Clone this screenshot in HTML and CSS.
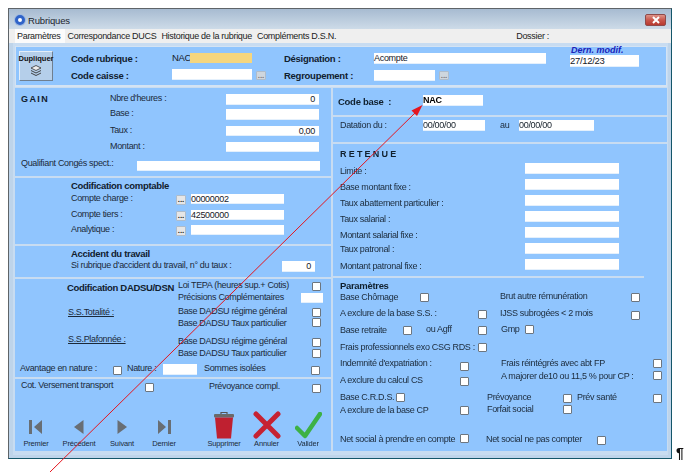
FILE: index.html
```html
<!DOCTYPE html>
<html lang="fr">
<head>
<meta charset="utf-8">
<title>Rubriques</title>
<link rel="stylesheet" href="styles.css">
</head>
<body>
<div class="page">
  <div class="window">
    <div class="titlebar">
      <span class="appicon"></span>
      <span class="title">Rubriques</span>
      <span class="close"><svg width="10" height="8" viewBox="0 0 10 8"><path d="M2 1l6 6M8 1l-6 6" stroke="#fff" stroke-width="2"/></svg></span>
    </div>
    <div class="tabs">
      <span class="tab active">Paramètres</span>
      <span class="tab">Correspondance DUCS</span>
      <span class="tab">Historique de la rubrique</span>
      <span class="tab">Compléments D.S.N.</span>
      <span class="dossier">Dossier :</span>
    </div>
    <div class="frame">
      <div class="content">
        <header class="head">
          <div class="r h18">
            <button class="dup x19"><span>Dupliquer</span>
              <svg width="12" height="11" viewBox="0 0 12 11"><path d="M1 3l5-2.500 5 2.500-5 2.500z" fill="#eee" stroke="#333" stroke-width=".8"/><path d="M1 5.500l5 2.500 5-2.500M1 8l5 2.500L11 8" fill="none" stroke="#333" stroke-width=".9"/></svg>
            </button>
            <span class="lb b x71 t2">Code rubrique :</span>
            <span class="lb plain x172 t2">NAC</span>
            <span class="fld orange x190 t2"></span>
            <span class="lb b x284 t2">Désignation :</span>
            <span class="fld w172 x374 t2">Acompte</span>
            <div class="dern x570"><em>Dern. modif.</em><span class="fld w69 tall">27/12/23</span></div>
          </div>
          <div class="r h18">
            <span class="lb b x71 t1">Code caisse :</span>
            <span class="fld w80 x172 t0"></span>
            <span class="dots x256 t2 flat">...</span>
            <span class="lb b x284 t1">Regroupement :</span>
            <span class="fld w61 x374 t1"></span>
            <span class="dots x439 t2 flat">...</span>
          </div>
        </header>

        <div class="main">
          <div class="left">
            <section class="sec gain">
              <div class="r h15"><span class="lb b sp-tight x21">GAIN</span><span class="lb x110">Nbre d'heures :</span><span class="fld w93 num x226">0</span></div>
              <div class="r h17"><span class="lb x110">Base :</span><span class="fld w93 x226"></span></div>
              <div class="r h16"><span class="lb x110">Taux :</span><span class="fld w93 num x226 low">0,00</span></div>
              <div class="r h17"><span class="lb x110">Montant :</span><span class="fld w93 x226 low"></span></div>
              <div class="r h17"><span class="lb x21">Qualifiant Congés spect.:</span><span class="fld w183 x137 t2 low"></span></div>
            </section>
            <section class="sec compta">
              <div class="r h14"><span class="lb b big x71">Codification comptable</span></div>
              <div class="r h16"><span class="lb x71">Compte charge :</span><span class="dots x176 t1">...</span><span class="fld w93 low x191">00000002</span></div>
              <div class="r h15"><span class="lb x71">Compte tiers :</span><span class="dots x176 t1">...</span><span class="fld w93 low x191">42500000</span></div>
              <div class="r h19"><span class="lb x71">Analytique :</span><span class="dots x176 t1">...</span><span class="fld w93 low x191"></span></div>
            </section>
            <section class="sec accident">
              <div class="r h13"><span class="lb b big x71">Accident du travail</span></div>
              <div class="r h18"><span class="lb x71">Si rubrique d'accident du travail, n° du taux :</span><span class="fld w33 num x282">0</span></div>
            </section>
            <section class="sec dadsu">
              <div class="r h12"><span class="lb b big x67 t1">Codification DADSU/DSN</span><span class="lb x178">Loi TEPA (heures sup.+ Cotis)</span><i class="chk x312 t1"></i></div>
              <div class="r h14"><span class="lb x178">Précisions Complémentaires</span><span class="fld w22 low x301"></span></div>
              <div class="r h11"><span class="lb u x68 t1">S.S.Totalité :</span><span class="lb x178">Base DADSU régime général</span><i class="chk x312 t1"></i></div>
              <div class="r h17"><span class="lb x178 t1">Base DADSU Taux particulier</span><i class="chk x312"></i></div>
              <div class="r h14"><span class="lb u x68">S.S.Plafonnée :</span><span class="lb x178 t2">Base DADSU régime général</span><i class="chk x312 t3"></i></div>
              <div class="r h15"><span class="lb x178">Base DADSU Taux particulier</span><i class="chk x312"></i></div>
              <div class="r h15"><span class="lb x20">Avantage en nature :</span><i class="chk x113 t2"></i><span class="lb x127">Nature :</span><span class="fld w34 x163"></span><span class="lb x204">Sommes isolées</span><i class="chk x311 t2"></i></div>
            </section>
            <section class="transport">
              <div class="r h24"><span class="lb x21">Cot. Versement transport</span><i class="chk x145 t2"></i><span class="lb x209 t1">Prévoyance compl.</span><i class="chk x312 t3"></i></div>
            </section>
            <nav class="actions">
              <div class="act"><svg width="14" height="14" viewBox="0 0 14 14"><path d="M0 0h3v14H0zM13 0v14L5 7z" fill="#686e74"/></svg><span>Premier</span></div>
              <div class="act"><svg width="10" height="14" viewBox="0 0 10 14"><path d="M9.500 0v14L0 7z" fill="#686e74"/></svg><span>Précédent</span></div>
              <div class="act"><svg width="10" height="14" viewBox="0 0 10 14"><path d="M.500 0v14L10 7z" fill="#686e74"/></svg><span>Suivant</span></div>
              <div class="act"><svg width="14" height="14" viewBox="0 0 14 14"><path d="M11 0h3v14h-3zM1 0v14l8-7z" fill="#686e74"/></svg><span>Dernier</span></div>
              <div class="act gap large"><svg width="20" height="28" viewBox="0 0 20 28"><path d="M7 3V1.500h6V3" fill="none" stroke="#555" stroke-width="1.200"/><rect y="3" width="20" height="3.500" rx="1" fill="#6a6a6a"/><path d="M1 6.500h18l-2 21H3z" fill="#bf2030"/></svg><span>Supprimer</span></div>
              <div class="act large"><svg width="28" height="28" viewBox="0 0 28 28"><path d="M3 3l22 22M25 3L3 25" stroke="#c62232" stroke-width="5" stroke-linecap="round"/></svg><span>Annuler</span></div>
              <div class="act large"><svg width="27" height="27" viewBox="0 0 27 27"><path d="M2 16l8 8L25 2" fill="none" stroke="#3db145" stroke-width="4.500" stroke-linecap="round" stroke-linejoin="round"/></svg><span>Valider</span></div>
            </nav>
          </div>

          <div class="right">
            <section class="sec base">
              <div class="r h20"><span class="lb b x338 t1">Code base&nbsp; :</span><span class="fld w60 bold x423">NAC</span></div>
            </section>
            <section class="sec datation">
              <div class="r h22"><span class="lb x340">Datation du :</span><span class="fld w62 x423">00/00/00</span><span class="lb x500">au</span><span class="fld w75 x519">00/00/00</span></div>
            </section>
            <section class="sec retenue">
              <div class="r h14"><span class="lb b sp x340">RETENUE</span></div>
              <div class="r h16"><span class="lb x340 t3">Limite :</span><span class="fld w94 x525"></span></div>
              <div class="r h16"><span class="lb x340 t3">Base montant fixe :</span><span class="fld w94 x525"></span></div>
              <div class="r h16"><span class="lb x340 t3">Taux abattement particulier :</span><span class="fld w94 x525"></span></div>
              <div class="r h16"><span class="lb x340 t3">Taux salarial :</span><span class="fld w94 x525"></span></div>
              <div class="r h16"><span class="lb x340 t3">Montant salarial fixe :</span><span class="fld w94 x525"></span></div>
              <div class="r h16"><span class="lb x340 t1">Taux patronal :</span><span class="fld w94 x525"></span></div>
              <div class="r h16"><span class="lb x340 t2">Montant patronal fixe :</span><span class="fld w94 x525"></span></div>
            </section>
            <section class="params">
              <div class="r h12"><span class="lb b big x340 t1">Paramètres</span></div>
              <div class="r h17"><span class="lb x340 t1">Base Chômage</span><i class="chk x420 t2"></i><span class="lb x500">Brut autre rémunération</span><i class="chk x631 t2"></i></div>
              <div class="r h16"><span class="lb x340">A exclure de la base S.S. :</span><i class="chk x478 t2"></i><span class="lb x500">IJSS subrogées &lt; 2 mois</span><i class="chk x631 t3"></i></div>
              <div class="r h17"><span class="lb x340 t1">Base retraite</span><i class="chk x403 t2"></i><span class="lb x426">ou Agff</span><i class="chk x478 t2"></i><span class="lb x501">Gmp</span><i class="chk x525 t1"></i></div>
              <div class="r h17"><span class="lb x340 t1">Frais professionnels exo CSG RDS :</span><i class="chk x478 t2"></i></div>
              <div class="r h13"><span class="lb x340">Indemnité d'expatriation :</span><i class="chk x460 t4"></i><span class="lb x501">Frais réintégrés avec abt FP</span><i class="chk x653 t1"></i></div>
              <div class="r h21"><span class="lb x340 t4">A exclure du calcul CS</span><i class="chk x460 t6"></i><span class="lb x501">A majorer de10 ou 11,5 % pour CP :</span><i class="chk x653"></i></div>
              <div class="r h12"><span class="lb x340">Base C.R.D.S.</span><i class="chk x396 t1"></i><span class="lb x487">Prévoyance</span><i class="chk x563 t2"></i><span class="lb x577">Prév santé</span><i class="chk x653 t2"></i></div>
              <div class="r h30"><span class="lb x340 t1">A exclure de la base CP</span><i class="chk x460 t2"></i><span class="lb x487">Forfait social</span><i class="chk x563 t1"></i></div>
              <div class="r h11"><span class="lb x340">Net social à prendre en compte</span><i class="chk x460"></i><span class="lb x486">Net social ne pas compter</span><i class="chk x597 t2"></i></div>
            </section>
          </div>
        </div>
      </div>
    </div>
  </div>
  <span class="pilcrow">¶</span>
</div>
<svg class="arrow" width="688" height="476" viewBox="0 0 688 476">
  <path d="M50 472L418 110" stroke="#e5161f" stroke-width="1" fill="none"/>
  <path d="M422.500 105L411.500 110.500L417 116z" fill="#e5161f"/>
</svg>
</body>
</html>
```
FILE: styles.css
```css
* { box-sizing: border-box; }
html, body { margin: 0; padding: 0; }
body {
  background: #fff;
  width: 688px;
  height: 476px;
  overflow: hidden;
  position: relative;
  font-family: "Liberation Sans", Arial, sans-serif;
  font-size: 10px;
  color: #1b2a3a;
}
.page {
  display: flex;
  align-items: flex-end;
  padding: 8px 0 0 8px;
  filter: blur(.35px);
}
.window {
  width: 664px;
  height: 451px;
  border: 1px solid #5e6468;
  border-right-color: #14566a;
  border-bottom-color: #14566a;
  display: flex;
  flex-direction: column;
}
.pilcrow {
  font: bold 14px/13px "Liberation Sans", sans-serif;
  color: #111;
  margin: 0 0 -1px 4px;
}
.arrow { position: absolute; left: 0; top: 0; pointer-events: none; }

/* title bar */
.titlebar {
  height: 20px;
  display: flex;
  align-items: center;
  padding: 2px 5px 0 6px;
  background: linear-gradient(#a7bbd1, #cddbe8);
}
.appicon {
  width: 10px;
  height: 10px;
  border-radius: 50%;
  border: 3px solid #2f63c8;
  background: #fff;
  box-shadow: 0 0 0 1px #9db8e0;
}
.title { margin-left: 3px; font-size: 9.5px; color: #1c2530; letter-spacing: -.15px; }
.close {
  margin-left: auto;
  width: 21px;
  height: 12px;
  border: 1px solid #8e4a4a;
  border-radius: 2px;
  background: linear-gradient(#dd9388, #c9574c 50%, #b8392f);
  display: flex;
  align-items: center;
  justify-content: center;
}

/* tabs */
.tabs {
  height: 14px;
  background: #efefef;
  display: flex;
  align-items: center;
  padding-left: 6px;
  font-size: 9px;
  color: #222;
  letter-spacing: -.3px;
}
.tab { padding: 0 2px; margin-right: 1px; line-height: 14px; white-space: nowrap; }
.tab.active { background: #fbfbfb; padding-right: 4px; }
.dossier { margin-left: auto; margin-right: 122px; }

/* frame */
.frame {
  flex: 1;
  padding: 0 3px 3px 4px;
  background: #bed4ea;
}
.content {
  height: 100%;
  background: #c8dcf1;
  padding: 3px 1px 4px 2px;
  display: flex;
  flex-direction: column;
}
.head {
  height: 41px;
  flex: none;
  margin-bottom: 1px;
  padding-top: 4px;
  border: 1px solid #d4e3f3;
  border-bottom-width: 2px;
  background: #90c5fe;
  --cols: [x16] 3px [x19] 52px [x71] 101px [x172] 18px [x190] 66px [x256] 28px [x284] 90px [x374] 65px [x439] 131px [x570] 80px;
}
.main { flex: 1; display: flex; }
.left { width: 316px; background: #90c5fe; display: flex; flex-direction: column; }
.right { width: 334px; margin-left: 2px; background: #90c5fe; display: flex; flex-direction: column; }

.sec { flex: none; border-bottom: 2px solid #c8dcf1; }
.left { --cols: [x15] 5px [x20] 1px [x21] 46px [x67] 1px [x68] 3px [x71] 39px [x110] 3px [x113] 14px [x127] 10px [x137] 8px [x145] 18px [x163] 13px [x176] 2px [x178] 13px [x191] 13px [x204] 5px [x209] 17px [x226] 56px [x282] 19px [x301] 10px [x311] 1px [x312] 19px; }
.right { --cols: [x333] 5px [x338] 2px [x340] 56px [x396] 7px [x403] 17px [x420] 3px [x423] 3px [x426] 34px [x460] 18px [x478] 8px [x486] 1px [x487] 13px [x500] 1px [x501] 18px [x519] 6px [x525] 38px [x563] 14px [x577] 20px [x597] 34px [x631] 22px [x653] 14px; }

.gain { padding-top: 6px; height: 90px; }
.compta { padding-top: 2px; height: 68px; }
.accident { padding-top: 2px; height: 33px; }
.dadsu { padding-top: 2px; height: 100px; }
.transport { padding-top: 2px; height: 26px; flex: none; }
.base { padding-top: 7px; height: 29px; }
.datation { padding-top: 3px; height: 27px; }
.retenue { padding-top: 5px; height: 134px; }
.retenue { border-image: linear-gradient(90deg, #c8dcf1 93%, #90c5fe 93%) 1; }
.params { padding-top: 1px; }

/* rows share the column lines of their panel */
.r { display: grid; grid-template-columns: var(--cols); align-items: start; }
.h11 { height: 11px; } .h12 { height: 12px; } .h13 { height: 13px; } .h14 { height: 14px; }
.h15 { height: 15px; } .h16 { height: 16px; } .h17 { height: 17px; } .h18 { height: 18px; }
.h20 { height: 20px; } .h21 { height: 21px; } .h22 { height: 22px; }
.h24 { height: 24px; } .h30 { height: 30px; }
.t0 { margin-top: 0; } .t1 { margin-top: 1px; } .t2 { margin-top: 2px; } .t3 { margin-top: 3px; }
.t4 { margin-top: 4px; } .t6 { margin-top: 6px; }

.x19 { grid-column-start: x19; } .x20 { grid-column-start: x20; } .x21 { grid-column-start: x21; }
.x67 { grid-column-start: x67; } .x68 { grid-column-start: x68; } .x71 { grid-column-start: x71; }
.x110 { grid-column-start: x110; } .x113 { grid-column-start: x113; } .x127 { grid-column-start: x127; }
.x137 { grid-column-start: x137; } .x145 { grid-column-start: x145; } .x163 { grid-column-start: x163; }
.x172 { grid-column-start: x172; } .x176 { grid-column-start: x176; } .x178 { grid-column-start: x178; }
.x190 { grid-column-start: x190; } .x191 { grid-column-start: x191; } .x204 { grid-column-start: x204; }
.x209 { grid-column-start: x209; } .x226 { grid-column-start: x226; } .x256 { grid-column-start: x256; }
.x282 { grid-column-start: x282; } .x284 { grid-column-start: x284; } .x301 { grid-column-start: x301; }
.x311 { grid-column-start: x311; } .x312 { grid-column-start: x312; } .x338 { grid-column-start: x338; }
.x340 { grid-column-start: x340; } .x374 { grid-column-start: x374; } .x396 { grid-column-start: x396; }
.x403 { grid-column-start: x403; } .x420 { grid-column-start: x420; } .x423 { grid-column-start: x423; }
.x426 { grid-column-start: x426; } .x439 { grid-column-start: x439; } .x460 { grid-column-start: x460; }
.x478 { grid-column-start: x478; } .x486 { grid-column-start: x486; } .x487 { grid-column-start: x487; }
.x500 { grid-column-start: x500; } .x501 { grid-column-start: x501; } .x519 { grid-column-start: x519; }
.x525 { grid-column-start: x525; } .x563 { grid-column-start: x563; } .x570 { grid-column-start: x570; }
.x577 { grid-column-start: x577; } .x597 { grid-column-start: x597; } .x631 { grid-column-start: x631; }
.x653 { grid-column-start: x653; }

/* text */
.lb {
  font-size: 9px;
  line-height: 9px;
  white-space: nowrap;
  letter-spacing: -.33px;
  width: 0;
}
.right .lb { line-height: 11px; }
.plain { font-size: 9.500px; letter-spacing: -.3px; line-height: 10px; color: #16202a; }
.b, .right .b { font-weight: bold; color: #10202e; font-size: 9.500px; letter-spacing: -.27px; line-height: 11px; }
.big { letter-spacing: -.32px; }
.right .big { letter-spacing: -.32px; }
.right .sp { letter-spacing: 2.200px; font-size: 9px; }
.sp-tight { letter-spacing: 1.400px; font-size: 9px; line-height: 10px; }
.u { text-decoration: underline; }

/* fields */
.fld {
  display: block;
  height: 11px;
  background: #fff;
  border: 1px solid #e4f0fc;
  border-width: 0 0 1px 0;
  font-size: 9px;
  letter-spacing: -.3px;
  line-height: 11px;
  color: #16202a;
  white-space: nowrap;
}
.low { height: 10px; line-height: 10px; }
.w22 { width: 22px; } .w33 { width: 33px; } .w34 { width: 34px; } .w60 { width: 60px; }
.w61 { width: 61px; } .w62 { width: 62px; } .w69 { width: 69px; } .w75 { width: 75px; }
.w80 { width: 80px; } .w93 { width: 93px; } .w94 { width: 94px; } .w172 { width: 172px; }
.w183 { width: 183px; }
.num { text-align: right; padding-right: 4px; }
.bold { font-weight: bold; color: #000; }
.orange { width: 62px; height: 10px; background: #f6d67e; border: 0; }
.tall { height: 12px; line-height: 12px; font-size: 9.500px; }

.dern { margin-top: -5px; }
.dern em {
  display: block;
  padding-left: 1px;
  font: italic bold 9px/9px "Liberation Sans", sans-serif;
  color: #1a22b8;
  white-space: nowrap;
}

.dots {
  width: 10px;
  height: 10px;
  border: 1px solid #aebccb;
  border-radius: 1px;
  background: #e6e6e6;
  font-size: 8px;
  font-weight: bold;
  line-height: 7px;
  text-align: center;
  color: #222;
}
.flat { height: 9px; background: #ced6de; color: #777; }

.chk {
  display: block;
  width: 9px;
  height: 9px;
  background: #fff;
  border: 1px solid #6c7680;
  border-radius: 1px;
}

.dup {
  height: 30px;
  width: 34px;
  padding: 2px 0 0;
  border: 1px solid;
  border-color: #e4eef8 #6f7f90 #6f7f90 #e4eef8;
  background: #b5cfea;
  font: bold 7.500px/9px "Liberation Sans", sans-serif;
  color: #111;
  display: flex;
  flex-direction: column;
  align-items: center;
  gap: 2px;
}

/* bottom actions */
.actions {
  flex: none;
  height: 44px;
  display: grid;
  grid-template-columns: 42px 44px 42px 42px 58px 47px 36px;
  align-items: end;
  width: 311px;
}
.act { display: flex; flex-direction: column; align-items: center; justify-content: flex-end; }
.act svg { display: block; margin-bottom: 5px; }
.large svg { margin-bottom: 0; }
.act span { font-size: 7.500px; line-height: 10px; letter-spacing: -.15px; white-space: nowrap; color: #1b2a3a; }
.gap { padding-left: 20px; }
```
